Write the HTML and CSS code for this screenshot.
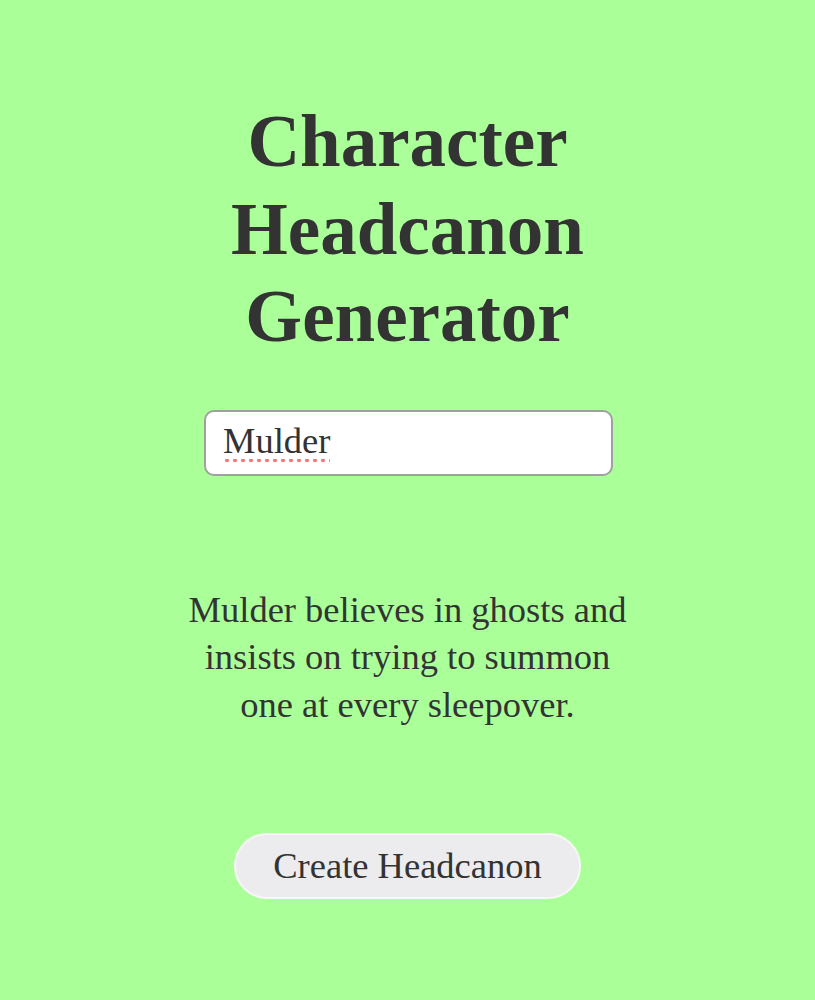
FILE: index.html
```html
<!DOCTYPE html>
<html lang="en">
<head>
<meta charset="utf-8">
<title>Character Headcanon Generator</title>
<link rel="stylesheet" href="styles.css">
</head>
<body>
  <main class="app">
    <h1 class="app-title">Character Headcanon Generator</h1>
    <div class="name-field" role="textbox" contenteditable="true" aria-label="Character name"><span class="misspelled">Mulder</span></div>
    <p class="headcanon">Mulder believes in ghosts and insists on trying to summon one at every sleepover.</p>
    <button class="create-btn" type="button">Create Headcanon</button>
  </main>
</body>
</html>
```

FILE: styles.css
```css
html, body {
  margin: 0;
  padding: 0;
}

body {
  background: #aaff99;
  color: #333333;
  font-family: "Liberation Serif", "Times New Roman", serif;
}

.app {
  display: flex;
  flex-direction: column;
  align-items: center;
  padding-top: 98px;
}

.app-title {
  width: 450px;
  margin: 0;
  font-size: 73px;
  line-height: 1.2;
  font-weight: bold;
  text-align: center;
}

.name-field {
  box-sizing: border-box;
  width: 409px;
  height: 66px;
  margin: 49px 0 0 2px;
  padding: 8px 17px 12px;
  background: #ffffff;
  border: 2px solid #a0a0a0;
  border-radius: 10px;
  font-size: 36.5px;
  line-height: 42px;
  color: #333333;
  outline: none;
}

/* spell-check style dotted underline */
.misspelled {
  padding-bottom: 2px;
  background-image: radial-gradient(circle, #f07c80 1.7px, rgba(240, 124, 128, 0) 2.1px);
  background-size: 8px 5px;
  background-repeat: repeat-x;
  background-position: 0 100%;
}

.headcanon {
  width: 450px;
  margin: 110px 0 0;
  font-size: 36.5px;
  line-height: 1.3;
  text-align: center;
}

.create-btn {
  box-sizing: border-box;
  margin-top: 105px;
  height: 66px;
  padding: 10px 37px;
  background: #ececee;
  border: 2px solid #f7f7f7;
  border-radius: 33px;
  font-family: "Liberation Serif", "Times New Roman", serif;
  font-size: 36.5px;
  line-height: 42px;
  color: #333333;
}
```
